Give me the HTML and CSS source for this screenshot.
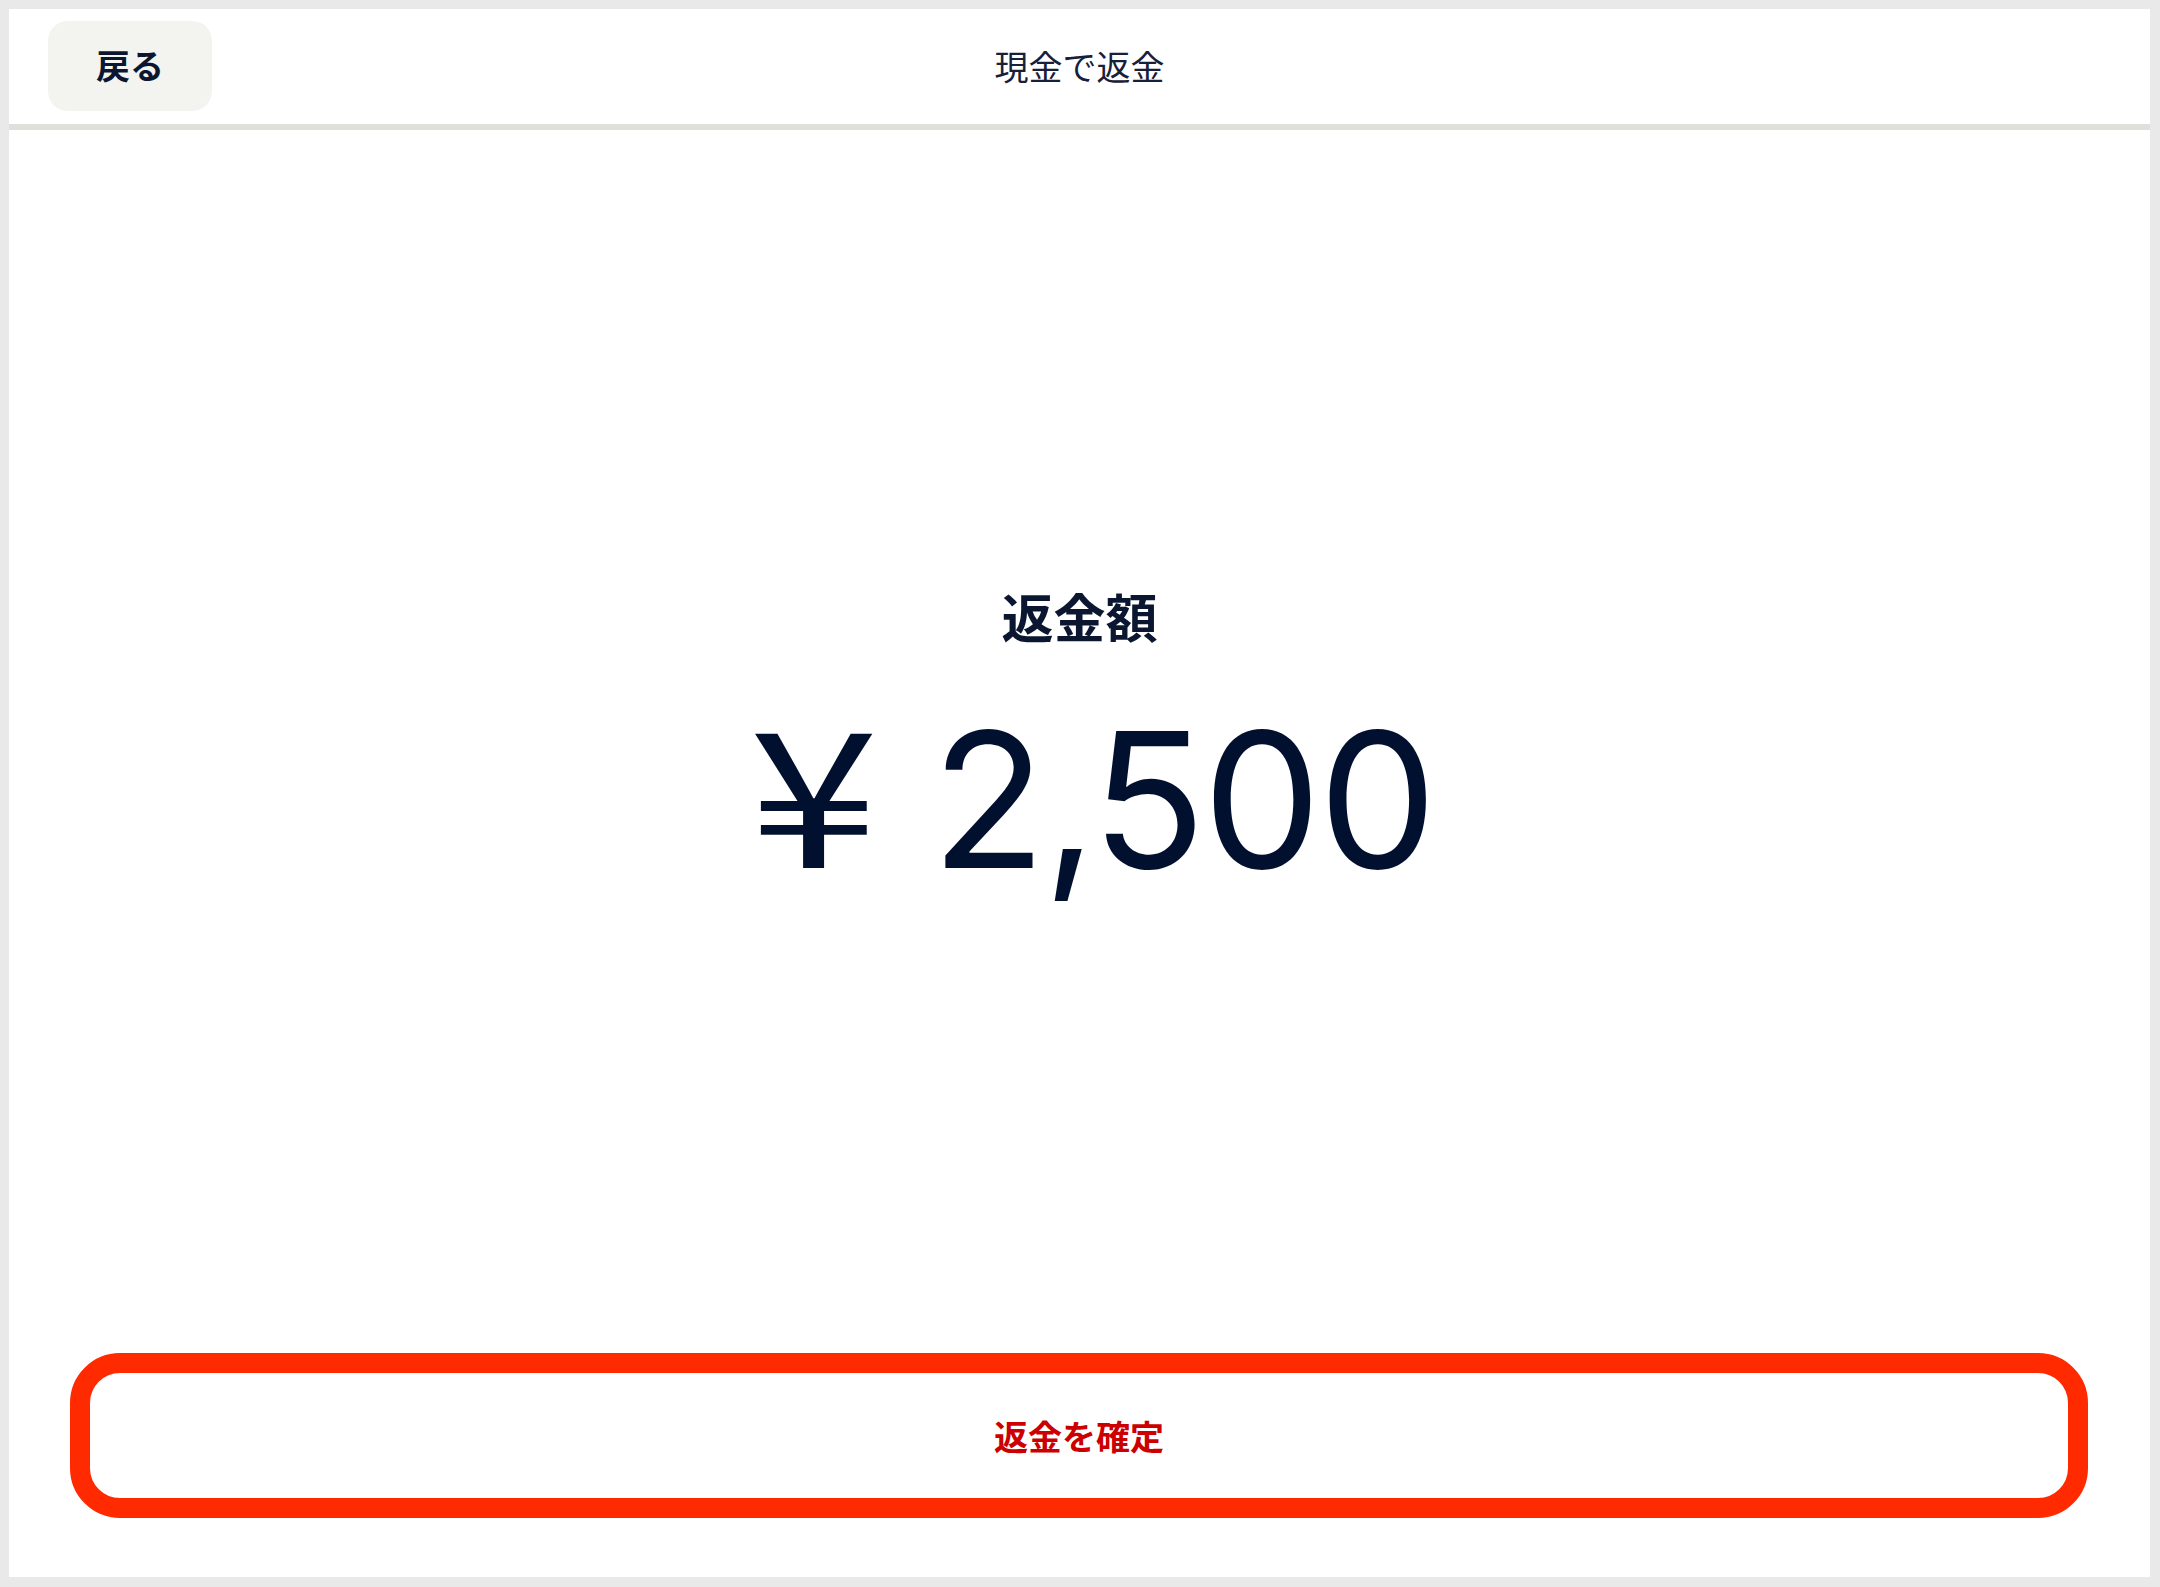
FILE: index.html
```html
<!DOCTYPE html>
<html lang="ja">
<head>
<meta charset="utf-8">
<title>現金で返金</title>
<link rel="stylesheet" href="styles.css">
</head>
<body>
<div class="screen">
  <header class="header">
    <div class="header-left"><button class="back">戻る</button></div>
    <h1 class="title">現金で返金</h1>
    <div class="header-right"></div>
  </header>
  <main class="main">
    <div class="label">返金額</div>
    <div class="amount"><span class="yen">¥</span><span class="num">2,500</span></div>
  </main>
  <footer class="footer">
    <button class="confirm">返金を確定</button>
  </footer>
</div>
</body>
</html>
```

FILE: styles.css
```css
html, body {
  margin: 0;
  height: 100%;
}
body {
  background: #e9e9e9;
  padding: 9px 10px 10px 9px;
  box-sizing: border-box;
  font-family: "Noto Sans CJK JP", "Noto Sans", sans-serif;
  color: #0b1630;
}
.screen {
  background: #ffffff;
  height: 100%;
  display: flex;
  flex-direction: column;
}
.header {
  height: 115px;
  border-bottom: 6px solid #dfe0da;
  display: grid;
  grid-template-columns: 1fr auto 1fr;
  align-items: center;
  padding: 0 39px;
  flex: none;
}
.back {
  width: 164px;
  height: 90px;
  margin-top: -1px;
  border: none;
  border-radius: 20px;
  background: #f3f3f0;
  font-family: "Noto Sans CJK JP", sans-serif;
  font-weight: 700;
  font-size: 34px;
  color: #0b1630;
  padding: 0 0 4px;
}
.title {
  margin: 0;
  margin-top: -3px;
  font-weight: 400;
  font-size: 34px;
  color: #17203a;
}
.main {
  flex: 1;
  display: flex;
  flex-direction: column;
  align-items: center;
  justify-content: center;
}
.label {
  font-weight: 700;
  font-size: 52px;
  line-height: 1;
  color: #0b1630;
}
.amount {
  margin-top: 50px;
  margin-left: 24px;
  font-family: "Inter", "Liberation Sans", sans-serif;
  font-size: 188px;
  line-height: 1;
  color: #00102e;
  display: flex;
  align-items: baseline;
}
.yen {
  display: inline-block;
  font-family: "Noto Sans CJK JP", sans-serif;
  font-weight: 400;
  margin-right: 78px;
  transform: scaleX(1.24);
  transform-origin: left center;
}
.num {
  letter-spacing: -3px;
}
.footer {
  flex: none;
  padding: 0 62px 59px 61px;
}
.confirm {
  width: 100%;
  height: 165px;
  border: 20px solid #ff2a00;
  border-radius: 50px;
  background: #ffffff;
  font-family: "Noto Sans CJK JP", sans-serif;
  font-weight: 700;
  font-size: 34px;
  color: #cc0000;
  display: flex;
  align-items: center;
  justify-content: center;
  box-sizing: border-box;
}
```
